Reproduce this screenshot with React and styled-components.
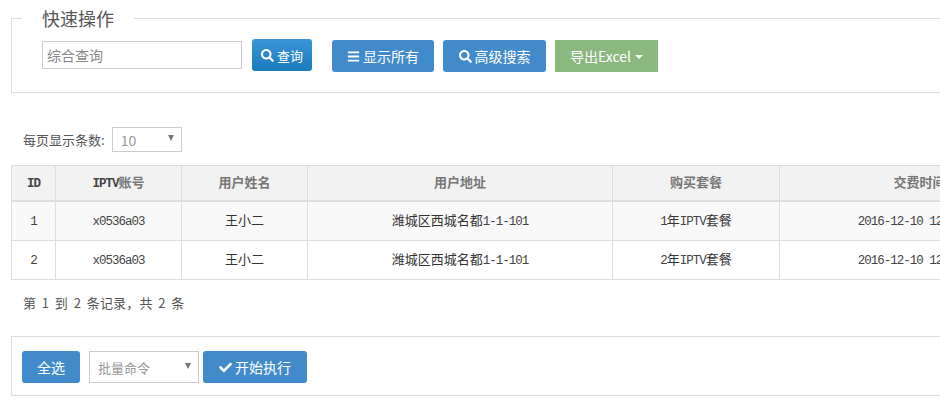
import React from 'react'
import styled, { createGlobalStyle } from 'styled-components'
import { FaSearch, FaCheck, FaBars } from 'react-icons/fa'

const sans = '"Noto Sans CJK SC", "Liberation Sans", sans-serif'

const Global = createGlobalStyle`
  html, body { margin: 0; padding: 0; background: #fff; overflow: hidden; }
  body { width: 940px; height: 412px; font-family: ${sans}; color: #444; }
  * { box-sizing: border-box; }
`

const Page = styled.div`
  width: 940px;
  height: 412px;
  overflow: hidden;
  padding: 6px 0 0 11px;
`

const Panel = styled.fieldset`
  width: 1100px;
  height: 87px;
  margin: 0;
  padding: 0 0 0 10px;
  border: 1px solid #ddd;
  min-inline-size: auto;
`

const PanelTitle = styled.legend`
  padding: 0 20px;
  height: 25px;
  font-size: 18px;
  line-height: 25px;
  color: #555;
`

const Toolbar = styled.div`
  display: flex;
  align-items: flex-start;
  margin-top: 8px;
  padding-left: 20px;
`

const SearchInput = styled.input`
  width: 200px;
  height: 28px;
  margin: 2px 10px 0 0;
  padding: 0 4px;
  border: 1px solid #ccc;
  font-family: ${sans};
  font-size: 14px;
  color: #555;
  outline: none;
  &::placeholder { color: #888; opacity: 1; }
`

const Button = styled.div`
  display: flex;
  align-items: center;
  justify-content: center;
  gap: ${p => p.$gap ?? 3}px;
  flex: none;
  width: ${p => p.$w}px;
  height: 32px;
  margin: ${p => p.$margin || '0'};
  border-radius: ${p => p.$radius ?? 3}px;
  background: ${p => p.$bg || '#428bca'};
  color: #fff;
  font-size: ${p => p.$size || 14}px;
  white-space: nowrap;
`

const Caret = styled.span`
  width: 0;
  height: 0;
  border-left: 4px solid transparent;
  border-right: 4px solid transparent;
  border-top: 4px solid #fff;
  margin: 2px 0 0 1px;
`

const PageSize = styled.div`
  display: flex;
  align-items: center;
  margin: 34px 0 13px 12px;
  font-size: 13px;
  color: #555;
`

const SelectBox = styled.div`
  display: flex;
  align-items: center;
  justify-content: space-between;
  flex: none;
  width: ${p => p.$w}px;
  height: ${p => p.$h}px;
  margin-left: ${p => p.$ml || 0}px;
  padding: 0 7px 0 8px;
  border: 1px solid #ccc;
  font-size: ${p => p.$size || 14}px;
  color: #999;
  background: #fff;
`

const SelectArrow = styled.span`
  width: 0;
  height: 0;
  margin-bottom: 3px;
  border-left: 3px solid transparent;
  border-right: 3px solid transparent;
  border-top: 6px solid #777;
`

const Table = styled.table`
  table-layout: fixed;
  width: 1049px;
  border-collapse: collapse;
  font-size: 13px;
  color: #333;
`

const Head = styled.th`
  height: 35px;
  padding: 0 0 3px;
  border: 1px solid #ddd;
  border-bottom: 2px solid #ddd;
  background: #f2f2f2;
  color: #777;
  font-size: 13px;
  font-weight: 700;
  text-align: center;
`

const Row = styled.tr`
  height: ${p => (p.$odd ? 40 : 39)}px;
  background: ${p => (p.$odd ? '#f9f9f9' : '#fff')};
`

const Cell = styled.td`
  padding: 0 0 3px;
  border: 1px solid #ddd;
  text-align: center;
  white-space: pre;
`

// half-width latin, the same 6.5px advance as the table's original font
const Mono = styled.span`
  font-family: "Liberation Mono", monospace;
  font-size: 12.5px;
  letter-spacing: -1px;
  color: #444;
`

const Summary = styled.div`
  margin: 14px 0 0 12px;
  font-size: 13px;
  line-height: 18px;
  letter-spacing: 0.2px;
  word-spacing: 2.5px;
  color: #555;
`

const BatchBar = styled.div`
  display: flex;
  align-items: center;
  width: 1100px;
  height: 60px;
  margin-top: 24px;
  padding: 2px 0 0 10px;
  border: 1px solid #ddd;
`

const widths = [44, 126, 126, 305, 167, 280]
const rows = [
  { id: '1', plan: '1' },
  { id: '2', plan: '2' },
]

export default function App() {
  return (
    <Page>
      <Global />
      <Panel>
        <PanelTitle>快速操作</PanelTitle>
        <Toolbar>
          <SearchInput placeholder="综合查询" />
          <Button $w={60} $size={13} $bg="linear-gradient(#3a95d5, #1a7bbf)" $margin="0 20px 0 0">
            <FaSearch size={13} />
            查询
          </Button>
          <Button $w={102} $margin="1px 9px 0 0">
            <FaBars size={13} />
            显示所有
          </Button>
          <Button $w={103} $margin="1px 9px 0 0">
            <FaSearch size={13} />
            高级搜索
          </Button>
          <Button $w={103} $bg="#8ab87f" $radius={0} $margin="1px 0 0 0">
            导出Excel
            <Caret />
          </Button>
        </Toolbar>
      </Panel>

      <PageSize>
        每页显示条数:
        <SelectBox $w={70} $h={25} $ml={7}>
          10
          <SelectArrow />
        </SelectBox>
      </PageSize>

      <Table>
        <colgroup>
          {widths.map((w, i) => (
            <col key={i} style={{ width: w }} />
          ))}
        </colgroup>
        <thead>
          <tr>
            <Head><Mono as="b">ID</Mono></Head>
            <Head><Mono as="b">IPTV</Mono>账号</Head>
            <Head>用户姓名</Head>
            <Head>用户地址</Head>
            <Head>购买套餐</Head>
            <Head>交费时间</Head>
          </tr>
        </thead>
        <tbody>
          {rows.map((r, i) => (
            <Row key={r.id} $odd={i === 0}>
              <Cell><Mono>{r.id}</Mono></Cell>
              <Cell><Mono>x0536a03</Mono></Cell>
              <Cell>王小二</Cell>
              <Cell>潍城区西城名都<Mono>1-1-101</Mono></Cell>
              <Cell><Mono>{r.plan}</Mono>年<Mono>IPTV</Mono>套餐</Cell>
              <Cell><Mono>2016-12-10 12:00:00</Mono></Cell>
            </Row>
          ))}
        </tbody>
      </Table>

      <Summary>第 1 到 2 条记录，共 2 条</Summary>

      <BatchBar>
        <Button $w={58} $margin="0 9px 0 0">全选</Button>
        <SelectBox $w={110} $h={32} $size={13}>
          批量命令
          <SelectArrow />
        </SelectBox>
        <Button $w={104} $margin="0 0 0 4px">
          <FaCheck size={13} />
          开始执行
        </Button>
      </BatchBar>
    </Page>
  )
}
